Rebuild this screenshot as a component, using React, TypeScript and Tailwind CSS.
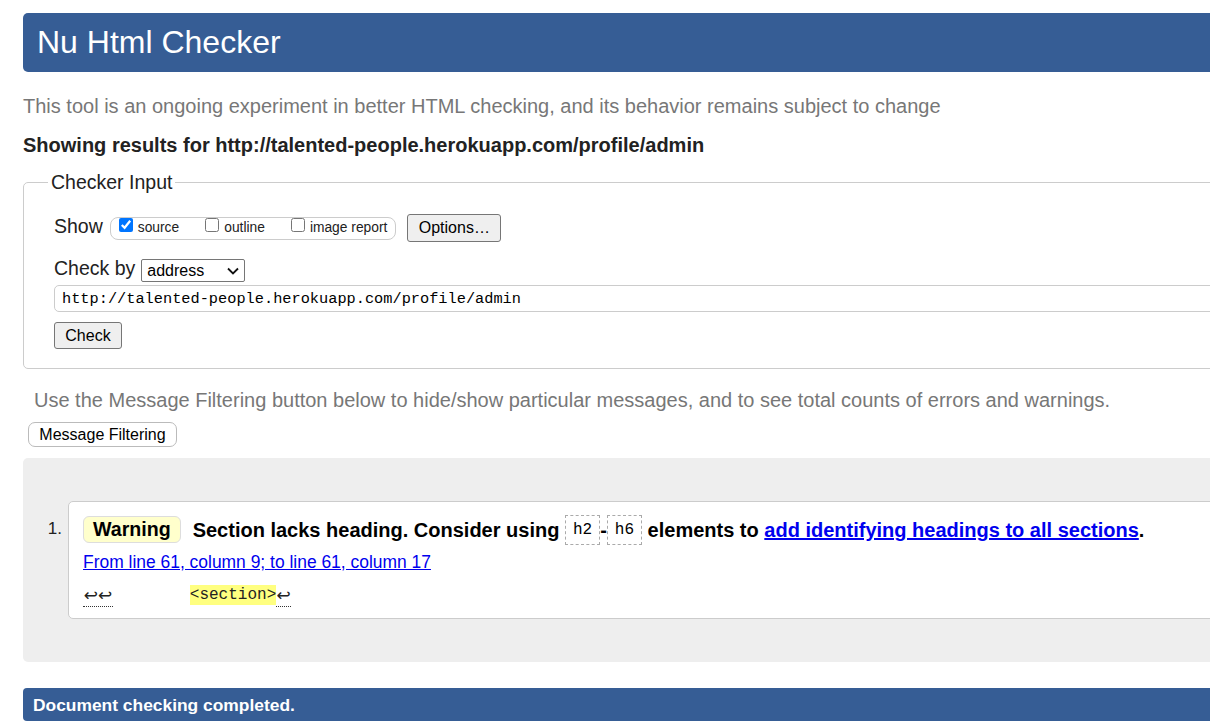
import React from "react";

function Checkbox({ checked, label }: { checked?: boolean; label: string }) {
  return (
    <label className="flex items-start">
      <input
        type="checkbox"
        defaultChecked={checked}
        className="m-0 w-[14px] h-[14px] accent-[#0075ff]"
      />
      <span className="ml-[5px] mt-[2px] text-[13.8px] leading-[16px] text-[#222]">{label}</span>
    </label>
  );
}

function Btn({ children, className = "" }: { children: React.ReactNode; className?: string }) {
  return (
    <button
      type="button"
      className={
        "bg-[#efefef] border border-[#767676] rounded-[3px] text-[16px] leading-[18px] text-black flex items-center justify-center " +
        className
      }
    >
      {children}
    </button>
  );
}

export default function App() {
  return (
    <div className="w-[1210px] h-[725px] overflow-hidden bg-white text-[#222] font-['Liberation_Sans',Arial,sans-serif]">
      <div className="w-[1250px] pl-[23px] pt-[13px]">
        <header className="h-[59px] rounded-[5px] bg-[#365d95] flex items-center pl-[14px]">
          <h1 className="text-white text-[32px] leading-[37px] font-normal">Nu Html Checker</h1>
        </header>

        <p className="mt-[23px] text-[20px] leading-[23px] text-[#777]">
          This tool is an ongoing experiment in better HTML checking, and its behavior remains subject to change
        </p>
        <p className="mt-[16px] text-[20px] leading-[23px] font-bold text-[#222]">
          Showing results for http://talented-people.herokuapp.com/profile/admin
        </p>

        <fieldset className="mt-[14px] border border-[#ccc] rounded-[5px] px-[30px] pb-[19px] min-w-0">
          <legend className="ml-[-6px] px-[3px] text-[19.5px] leading-[22px] text-[#222]">Checker Input</legend>

          <div className="mt-[21px] flex items-start h-[28px]">
            <span className="mt-[1px] text-[19.5px] leading-[22px]">Show</span>
            <div className="ml-[7px] mt-[3px] h-[23px] border border-[#ccc] rounded-[8px] flex items-start pl-[8px] pr-[8px] gap-[26px]">
              <Checkbox checked label="source" />
              <Checkbox label="outline" />
              <Checkbox label="image report" />
            </div>
            <Btn className="ml-[11px] w-[94px] h-[28px]">Options…</Btn>
          </div>

          <div className="mt-[17px] flex items-start h-[23px]">
            <span className="mt-[-2px] text-[19.5px] leading-[22px]">Check by</span>
            <div className="ml-[6px] w-[104px] h-[23px] border border-[#767676] rounded-[2px] bg-white flex items-center pl-[5px] pr-[5px] justify-between">
              <span className="text-[16px] leading-[18px] text-black">address</span>
              <svg width="12" height="8" viewBox="0 0 12 8">
                <path d="M1 1.5 L6 6.5 L11 1.5" fill="none" stroke="#111" strokeWidth="1.8" />
              </svg>
            </div>
          </div>

          <div className="mt-[3px] h-[27px] border border-[#ccc] rounded-[5px] flex items-center pl-[7px]">
            <span className="font-['Liberation_Mono','DejaVu_Sans_Mono',monospace] text-[15.3px] leading-[18px] text-black">
              http://talented-people.herokuapp.com/profile/admin
            </span>
          </div>

          <Btn className="mt-[10px] w-[68px] h-[27px]">Check</Btn>
        </fieldset>

        <p className="mt-[20px] ml-[11px] text-[20px] leading-[22px] text-[#777]">
          Use the Message Filtering button below to hide/show particular messages, and to see total counts of errors and warnings.
        </p>
        <button
          type="button"
          className="mt-[11px] ml-[5px] h-[25px] w-[149px] bg-white border border-[#bbb] rounded-[7px] text-[16px] leading-[18px] text-black flex items-center justify-center"
        >
          Message Filtering
        </button>

        <div className="mt-[11px] bg-[#eeeeee] rounded-[5px] pt-[43px] pb-[43px] pl-[20px] flex items-start">
          <span className="w-[19px] mt-[18px] text-right text-[17px] leading-[20px] text-[#222]">1.</span>
          <div className="ml-[6px] flex-1 bg-white border border-[#ccc] rounded-[5px] pt-[13px] pl-[14px] h-[118px]">
            <div className="flex items-start h-[30px]">
              <span className="mt-[1px] h-[27px] px-[9px] bg-[#ffffcc] border border-[#ddd] rounded-[6px] font-bold text-[19.6px] leading-[25px] text-black">
                Warning
              </span>
              <span className="ml-[12px] font-bold text-[20px] leading-[30px] text-black whitespace-nowrap">
                Section lacks heading. Consider using{" "}
                <code className="inline-block align-top h-[30px] px-[7px] border border-dashed border-[#aaa] font-['Liberation_Mono','DejaVu_Sans_Mono',monospace] font-normal text-[16px] leading-[28px]">
                  h2
                </code>
                -
                <code className="inline-block align-top h-[30px] px-[7px] border border-dashed border-[#aaa] font-['Liberation_Mono','DejaVu_Sans_Mono',monospace] font-normal text-[16px] leading-[28px]">
                  h6
                </code>{" "}
                elements to{" "}
                <a href="#" className="text-[#0000ee] underline">
                  add identifying headings to all sections
                </a>
                .
              </span>
            </div>
            <div className="mt-[6px]">
              <a href="#" className="text-[#0000ee] underline text-[17.45px] leading-[22px]">
                From line 61, column 9; to line 61, column 17
              </a>
            </div>
            <div className="mt-[10px] flex items-start h-[24px] font-['Liberation_Mono','DejaVu_Sans_Mono',monospace] text-[16px] leading-[20px] text-[#222] whitespace-pre">
              <span className="inline-block w-[30px] h-[22px] border-b border-dotted border-[#333] font-['DejaVu_Sans',sans-serif] text-[17px] leading-[21px] text-center">
                ↩↩
              </span>
              <span>{"        "}</span>
              <span className="inline-block bg-[#ffff80] h-[20px]">&lt;section&gt;</span>
              <span className="inline-block w-[15px] h-[22px] border-b border-dotted border-[#333] font-['DejaVu_Sans',sans-serif] text-[17px] leading-[21px] text-center">
                ↩
              </span>
            </div>
          </div>
        </div>

        <div className="mt-[26px] h-[33px] rounded-[4px] bg-[#365d95] flex items-center pl-[10px]">
          <span className="text-white font-bold text-[17.4px] leading-[20px]">Document checking completed.</span>
        </div>
      </div>
    </div>
  );
}
